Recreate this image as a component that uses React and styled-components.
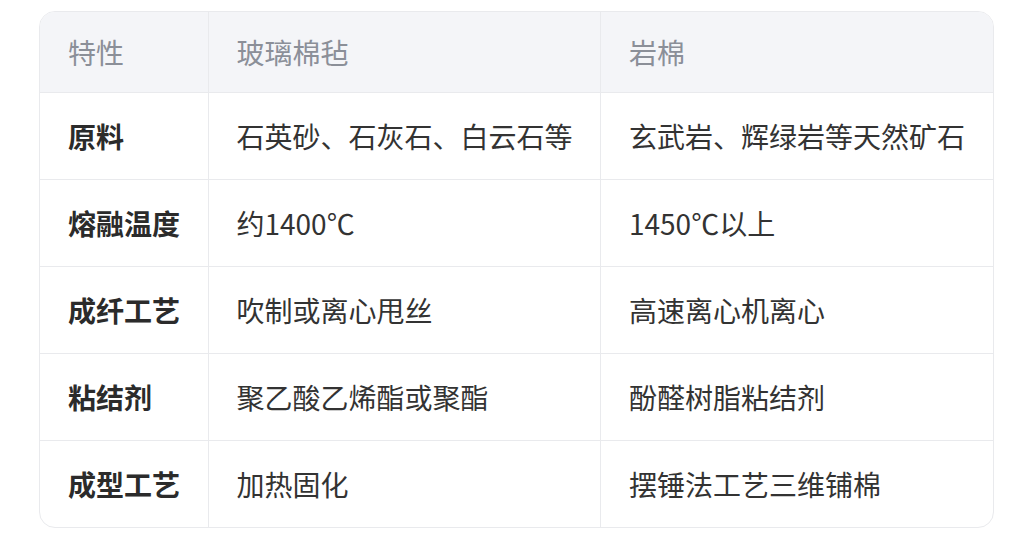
import styled, { createGlobalStyle } from 'styled-components';

const GlobalStyle = createGlobalStyle`
  html, body {
    margin: 0;
    padding: 0;
    background: #ffffff;
  }
  body {
    font-family: "Noto Sans CJK SC", "Noto Sans", "Liberation Sans", sans-serif;
  }
`;

const Page = styled.div`
  padding: 11px 18px 20px 39px;
`;

const Frame = styled.div`
  border: 1px solid #e9eaed;
  border-radius: 16px;
  overflow: hidden;
`;

const Table = styled.table`
  width: 100%;
  border-collapse: collapse;
  table-layout: fixed;
  font-size: 28px;
`;

const HeadCell = styled.th`
  background: #f4f5f8;
  color: #8b8f98;
  font-weight: 400;
  text-align: left;
  height: 80px;
  padding: 0 28px;
  box-sizing: border-box;
  border-bottom: 1px solid #e9eaed;
  border-left: ${p => (p.$first ? 'none' : '1px solid #e9eaed')};
  width: ${p => (p.$first ? '168px' : 'auto')};
`;

const Cell = styled.td`
  color: ${p => (p.$label ? '#2b2b2b' : '#333333')};
  font-weight: ${p => (p.$label ? 700 : 400)};
  height: 87px;
  padding: 0 28px;
  box-sizing: border-box;
  white-space: nowrap;
  border-top: 1px solid #e9eaed;
  border-left: ${p => (p.$label ? 'none' : '1px solid #e9eaed')};
`;

const rows = [
  ['原料', '石英砂、石灰石、白云石等', '玄武岩、辉绿岩等天然矿石'],
  ['熔融温度', '约1400℃', '1450℃以上'],
  ['成纤工艺', '吹制或离心甩丝', '高速离心机离心'],
  ['粘结剂', '聚乙酸乙烯酯或聚酯', '酚醛树脂粘结剂'],
  ['成型工艺', '加热固化', '摆锤法工艺三维铺棉'],
];

export default function App() {
  return (
    <Page>
      <GlobalStyle />
      <Frame>
        <Table>
          <thead>
            <tr>
              <HeadCell $first>特性</HeadCell>
              <HeadCell>玻璃棉毡</HeadCell>
              <HeadCell>岩棉</HeadCell>
            </tr>
          </thead>
          <tbody>
            {rows.map(([label, glass, rock]) => (
              <tr key={label}>
                <Cell $label>{label}</Cell>
                <Cell>{glass}</Cell>
                <Cell>{rock}</Cell>
              </tr>
            ))}
          </tbody>
        </Table>
      </Frame>
    </Page>
  );
}
